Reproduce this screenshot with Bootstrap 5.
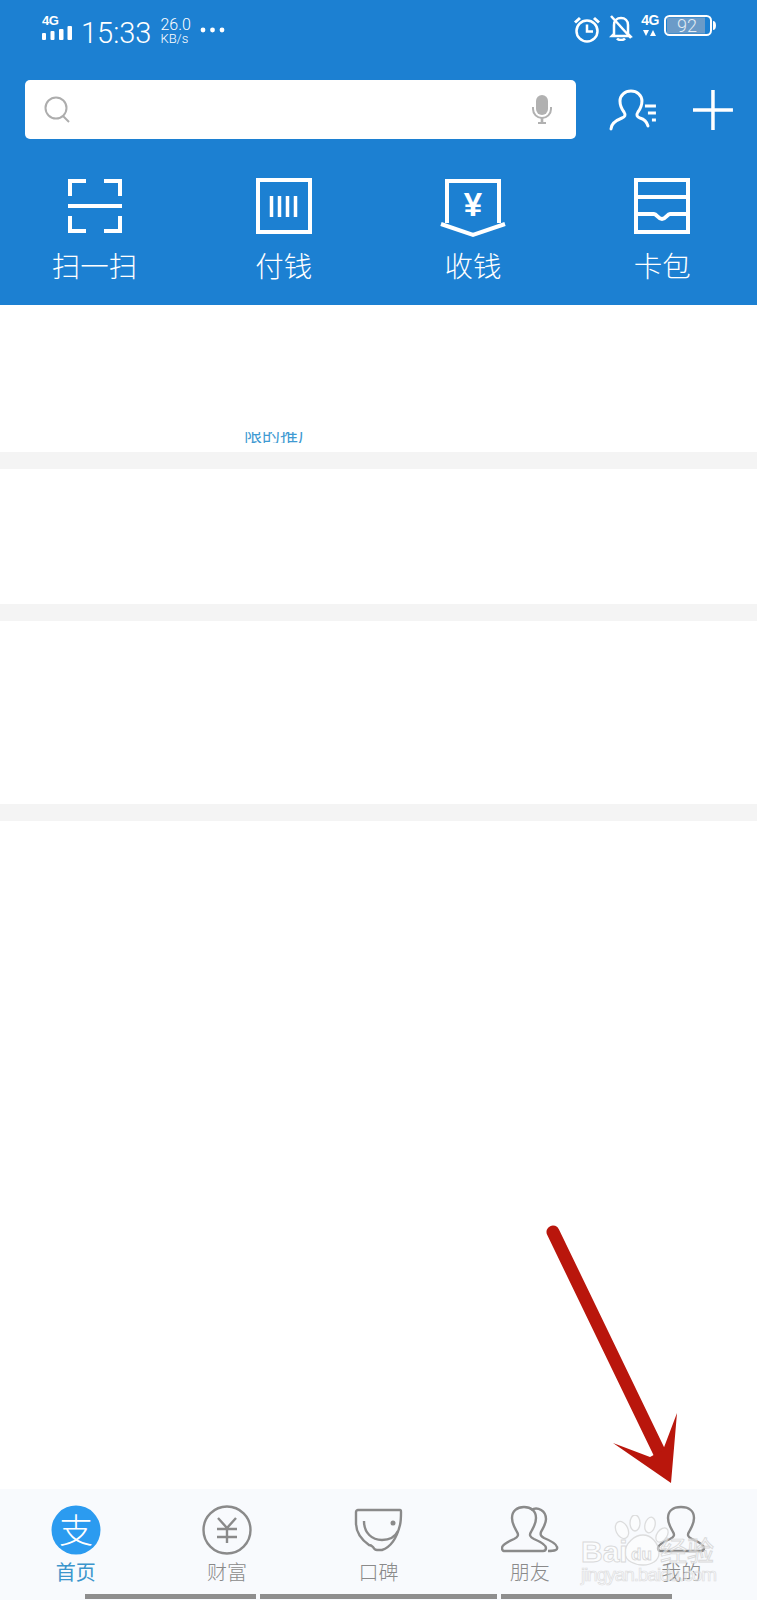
<!DOCTYPE html>
<html lang="zh-CN">

<head>
  <meta charset="UTF-8">
  <title>支付宝首页</title>
  <link href="https://cdn.jsdelivr.net/npm/bootstrap@5.3.0/dist/css/bootstrap.min.css" rel="stylesheet" />
  <style>
    body {
      font-family: "Noto Sans CJK SC", "Liberation Sans", sans-serif;
      background-color: #fff;
      width: 757px;
      margin: 0;
    }

    svg {
      display: block;
    }

    .app-screen {
      position: relative;
      width: 757px;
      height: 1600px;
      overflow: hidden;
    }

    .blue-head {
      background-color: #1c80d2;
      height: 305px;
      color: #fff;
    }

    .status-row {
      height: 62px;
      padding: 15px 41px 0 42px;
    }

    .net-tag {
      font-family: "Liberation Sans", sans-serif;
      font-weight: 700;
      font-size: 13px;
      line-height: 11px;
      letter-spacing: -0.5px;
    }

    .clock-text {
      font-family: Roboto, sans-serif;
      font-weight: 300;
      font-size: 29px;
      line-height: 34px;
      margin-left: 9px;
      margin-top: 1px;
    }

    .speed-text {
      font-family: Roboto, sans-serif;
      font-weight: 300;
      margin-left: 9px;
      margin-top: 2px;
      text-align: left;
    }

    .speed-text div:first-child {
      font-size: 16px;
      line-height: 15px;
    }

    .speed-text div:last-child {
      font-size: 13px;
      line-height: 13px;
    }

    .dots-icon {
      margin-left: 9px;
      margin-top: 7px;
    }

    .batt-icon {
      margin-left: -3px;
    }

    .search-row {
      height: 59px;
      margin-top: 18px;
      padding: 0 24px 0 25px;
    }

    .search-box {
      width: 552px;
      height: 59px;
      background: #fff;
      border-radius: 5px;
      padding: 0 24px 0 19px;
    }

    .user-btn {
      margin-left: 33px;
    }

    .plus-btn {
      margin-left: 34px;
    }

    .tile-row {
      margin-top: 39px;
    }

    .tile-item {
      width: 25%;
    }

    .tile-icon {
      height: 58px;
    }

    .tile-label {
      font-size: 28.5px;
      line-height: 38px;
      margin-top: 10px;
      font-weight: 300;
    }

    .blank-band {
      background: #fff;
    }

    .band-a {
      height: 147px;
    }

    .band-b {
      height: 135px;
    }

    .band-c {
      height: 183px;
    }

    .band-gap {
      height: 17px;
      background: #f4f4f4;
    }

    .clip-line {
      height: 11px;
      margin-top: 127px;
      overflow: hidden;
      color: #3f9ad2;
      font-size: 18px;
      line-height: 18px;
      padding-left: 244px;
    }

    .foot-nav {
      height: 111px;
      background: #f8fafd;
      padding-top: 16px;
    }

    .nav-item-box {
      width: 20%;
      color: #8a8a8a;
      font-size: 20px;
      line-height: 30px;
      font-weight: 300;
    }

    .nav-item-box.is-on {
      color: #3b95cc;
      font-weight: 400;
    }

    .nav-glyph {
      height: 50px;
      margin-bottom: 2px;
    }

    .home-bars {
      height: 5px;
      margin-top: 7px;
      padding-left: 85px;
    }

    .home-bars span {
      display: block;
      height: 5px;
      background: #8e8e8e;
    }

    .arrow-layer {
      position: absolute;
      left: 0;
      top: 1200px;
    }

    .baidu-mark {
      position: absolute;
      left: 575px;
      top: 1515px;
      width: 150px;
      height: 72px;
      opacity: .8;
    }
  </style>
</head>

<body>
  <div class="app-screen d-flex flex-column">

    <div class="blue-head">
      <!-- status bar -->
      <div class="status-row d-flex justify-content-between">
        <div class="d-flex align-items-start">
          <div>
            <div class="net-tag">4G</div>
            <svg width="30" height="15" viewBox="0 0 30 15" fill="#fff">
              <rect x="0" y="7" width="4" height="7" rx="1" />
              <rect x="8.500" y="5" width="4" height="9" rx="1" />
              <rect x="17" y="3" width="4.500" height="11" rx="1" />
              <rect x="25.500" y="0" width="4.500" height="14" rx="1" />
            </svg>
          </div>
          <div class="clock-text">15:33</div>
          <div class="speed-text">
            <div>26.0</div>
            <div>KB/s</div>
          </div>
          <svg class="dots-icon" width="26" height="16" viewBox="0 0 26 16" fill="#fff">
            <circle cx="3" cy="8" r="2.400" />
            <circle cx="12.500" cy="8" r="2.400" />
            <circle cx="22" cy="8" r="2.400" />
          </svg>
        </div>
        <div class="d-flex align-items-start gap-2">
          <svg width="28" height="28" viewBox="0 0 28 28" fill="none" stroke="#fff" stroke-width="2.500">
            <circle cx="14" cy="16" r="10.500" />
            <path d="M14 9.500v7h6" />
            <path d="M2 7.500 7 3M26 7.500 21 3" stroke-width="3" />
          </svg>
          <svg width="24" height="26" viewBox="0 0 24 26" fill="none" stroke="#fff" stroke-width="2.500">
            <path d="M5 19V10C5 5.500 8 3 12 3s7 2.500 7 7v9l2 2H3z" />
            <path d="M8 23.500c1.500 2 6.500 2 8 0" />
            <path d="M2 1 22 23" />
          </svg>
          <div>
            <div class="net-tag" style="font-size:14px;">4G</div>
            <svg class="mt-1" width="16" height="7" viewBox="0 0 16 7" fill="#fff">
              <path d="M2 0h6L5 6zM9 6h6l-3-6z" />
            </svg>
          </div>
          <svg class="batt-icon" width="52" height="22" viewBox="0 0 52 22">
            <rect x="3" y="2.500" width="38" height="16" fill="#6b9bc8" />
            <rect x="1" y="1" width="46" height="19" rx="4.500" fill="none" stroke="#fff" stroke-width="2" />
            <path d="M49 6c2 0 3 2 3 4.500S51 15 49 15z" fill="#fff" />
            <text x="23" y="17" text-anchor="middle" font-family="Roboto, sans-serif" font-weight="300" font-size="18" fill="#e4ecf3">92</text>
          </svg>
        </div>
      </div>

      <!-- search -->
      <div class="search-row d-flex align-items-center">
        <div class="search-box d-flex justify-content-between align-items-center">
          <svg width="26" height="28" viewBox="0 0 26 28" fill="none" stroke="#adadad" stroke-width="2">
            <circle cx="12" cy="12" r="10.500" />
            <path d="M19 20l6 6" />
          </svg>
          <svg width="20" height="30" viewBox="0 0 20 30" fill="#b1b1b1">
            <rect x="4" y="0" width="12" height="20" rx="6" />
            <path d="M1 12v2c0 5 4 9 9 9s9-4 9-9v-2" fill="none" stroke="#b1b1b1" stroke-width="2" />
            <rect x="8.700" y="22" width="2.600" height="6" />
            <rect x="6" y="27" width="8" height="2" />
          </svg>
        </div>
        <svg class="user-btn" width="50" height="42" viewBox="0 0 50 42" fill="none" stroke="#fff" stroke-width="3" stroke-linecap="round">
          <path d="M2 40c0-6 6-9 11-11 3-1 4-3 2-6-3-4-4-7-4-11 0-6 5-10 11-10s11 4 11 10c0 4-1 7-4 11-2 3-1 5 2 6 4 1 7 4 8 8" />
          <path d="M36 17h11M39 24h8M43 31h4" stroke-linecap="butt" />
        </svg>
        <svg class="plus-btn" width="40" height="40" viewBox="0 0 40 40" stroke="#fff" stroke-width="3.500">
          <path d="M0 20h40M20 0v40" />
        </svg>
      </div>

      <!-- main actions -->
      <div class="tile-row d-flex text-center">
        <div class="tile-item">
          <div class="tile-icon d-flex justify-content-center">
            <svg width="56" height="58" viewBox="0 0 56 58" fill="none" stroke="#fff" stroke-width="4">
              <path d="M19 3H3v15M37 3h16v15M19 53H3V38M37 53h16V38" />
              <path d="M1 28h54" />
            </svg>
          </div>
          <div class="tile-label">扫一扫</div>
        </div>
        <div class="tile-item">
          <div class="tile-icon d-flex justify-content-center">
            <svg width="56" height="58" viewBox="0 0 56 58" fill="none" stroke="#fff">
              <rect x="2" y="2" width="52" height="52" stroke-width="4" />
              <path d="M15.500 18v21M23.500 18v21M31.500 18v21M39.500 18v21" stroke-width="3.500" />
            </svg>
          </div>
          <div class="tile-label">付钱</div>
        </div>
        <div class="tile-item">
          <div class="tile-icon d-flex justify-content-center">
            <svg width="66" height="60" viewBox="0 0 66 60" fill="none" stroke="#fff" stroke-width="4">
              <path d="M7 45V3h52v42" />
              <path d="M1 46l32 11 32-11" />
              <text x="33" y="38" text-anchor="middle" font-family="Liberation Sans, sans-serif" font-weight="700" font-size="33" fill="#fff" stroke="none">¥</text>
            </svg>
          </div>
          <div class="tile-label">收钱</div>
        </div>
        <div class="tile-item">
          <div class="tile-icon d-flex justify-content-center">
            <svg width="56" height="58" viewBox="0 0 56 58" fill="none" stroke="#fff" stroke-width="4">
              <rect x="2" y="2" width="52" height="52" />
              <path d="M2 19h52" />
              <path d="M2 36h18c3 0 4 5 8 5s5-5 8-5h18" />
            </svg>
          </div>
          <div class="tile-label">卡包</div>
        </div>
      </div>
    </div>

    <div class="blank-band band-a">
      <div class="clip-line d-flex align-items-end"><span>限的推广</span></div>
    </div>
    <div class="band-gap"></div>
    <div class="blank-band band-b"></div>
    <div class="band-gap"></div>
    <div class="blank-band band-c"></div>
    <div class="band-gap"></div>
    <div class="blank-band flex-grow-1"></div>

    <!-- tab bar -->
    <div class="foot-nav">
      <div class="d-flex text-center">
        <div class="nav-item-box is-on">
          <div class="nav-glyph d-flex justify-content-center">
            <svg width="50" height="50" viewBox="0 0 50 50">
              <circle cx="25" cy="25" r="24.500" fill="#2b9bf0" />
              <text x="25" y="38" text-anchor="middle" font-family="Noto Sans CJK SC, sans-serif" font-size="34" font-weight="300" fill="#fff">支</text>
            </svg>
          </div>
          <div>首页</div>
        </div>
        <div class="nav-item-box">
          <div class="nav-glyph d-flex justify-content-center">
            <svg width="50" height="50" viewBox="0 0 50 50" fill="none" stroke="#8a8a8a" stroke-width="2.400">
              <circle cx="25" cy="25" r="23.500" />
              <path d="M16 13l9 10 9-10M15 24h20M15 32h20M25 23v15" />
            </svg>
          </div>
          <div>财富</div>
        </div>
        <div class="nav-item-box">
          <div class="nav-glyph d-flex justify-content-center">
            <svg width="50" height="50" viewBox="0 0 50 50" fill="none" stroke="#8a8a8a" stroke-width="2.400">
              <path d="M3 7c0-1 1-2 2-2h42c1 0 1 1 1 2 0 3 0 9-1 13-3 12-9 22-18 25h-5c-2 0-3-1-4-3-1-1-2-2-4-2C9 35 3 28 3 18z" />
              <path d="M11 16c0 12 8 19 18 19 7 0 13-3 16-9" />
              <circle cx="40" cy="18" r="2.500" fill="#8a8a8a" stroke="none" />
            </svg>
          </div>
          <div>口碑</div>
        </div>
        <div class="nav-item-box">
          <div class="nav-glyph d-flex justify-content-center">
            <svg width="58" height="50" viewBox="0 0 58 50" fill="none" stroke="#8a8a8a" stroke-width="2.400">
              <path d="M30 5c7-4 15 1 15 9 0 5-3 9-5 13-1 3 0 4 3 6 5 2 12 5 13 9 1 3-2 4-9 4" />
              <path d="M4 46c-2 0-3-1-3-3 0-3 5-6 12-9 4-2 5-4 3-7-2-4-5-8-5-14C11 6 16 2 23 2s12 4 12 11c0 6-3 10-5 14-2 3-1 5 3 7 7 3 12 6 12 9 0 2-1 3-3 3z" />
            </svg>
          </div>
          <div>朋友</div>
        </div>
        <div class="nav-item-box">
          <div class="nav-glyph d-flex justify-content-center">
            <svg width="50" height="50" viewBox="0 0 50 50" fill="none" stroke="#8a8a8a" stroke-width="2.400">
              <path d="M5 46c-2 0-3-1-3-3 0-3 5-6 12-9 4-2 5-4 3-7-2-4-5-8-5-14C12 6 17 2 25 2s13 4 13 11c0 6-3 10-5 14-2 3-1 5 3 7 7 3 12 6 12 9 0 2-1 3-3 3z" />
            </svg>
          </div>
          <div>我的</div>
        </div>
      </div>
      <div class="home-bars d-flex gap-1">
        <span style="width:171px"></span>
        <span style="width:237px"></span>
        <span style="width:171px"></span>
      </div>
    </div>

    <!-- annotation arrow on top of the screenshot -->
    <svg class="arrow-layer" width="757" height="300" viewBox="0 1200 757 300">
      <path d="M553 1232 665 1464" stroke="#b9160c" stroke-width="13" stroke-linecap="round" fill="none" />
      <path d="M671 1483 613 1443 650 1457 663 1450 677 1413z" fill="#b9160c" />
    </svg>

    <!-- baidu watermark -->
    <svg class="baidu-mark" viewBox="0 0 150 72">
      <g fill="#fff" fill-opacity=".55" stroke="#d6d6d6" stroke-width="1.300">
        <ellipse cx="47" cy="15" rx="6" ry="9" transform="rotate(-25 47 15)" />
        <ellipse cx="60" cy="8" rx="5" ry="8" />
        <ellipse cx="75" cy="10" rx="5" ry="8" transform="rotate(15 75 10)" />
        <ellipse cx="87" cy="20" rx="5" ry="8" transform="rotate(35 87 20)" />
        <path d="M50 38c0-10 10-18 18-18s16 8 16 18c0 8-8 12-16 12s-18-4-18-12z" />
      </g>
      <g font-family="Liberation Sans, sans-serif" font-weight="700" fill="#fff" fill-opacity=".7" stroke="#d2d2d2" stroke-width=".9">
        <text x="6" y="47" font-size="30">Bai</text>
        <text x="56" y="45" font-size="17">du</text>
        <text x="85" y="46" font-size="27" font-family="Noto Sans CJK SC, sans-serif" font-weight="400">经验</text>
      </g>
      <text x="6" y="66" font-family="Liberation Sans, sans-serif" font-size="19" fill="#fff" fill-opacity=".4" stroke="#d8d8d8" stroke-width=".7" textLength="136">jingyan.baidu.com</text>
    </svg>

  </div>

  <script src="https://cdn.jsdelivr.net/npm/bootstrap@5.3.0/dist/js/bootstrap.bundle.min.js"></script>
</body>

</html>
